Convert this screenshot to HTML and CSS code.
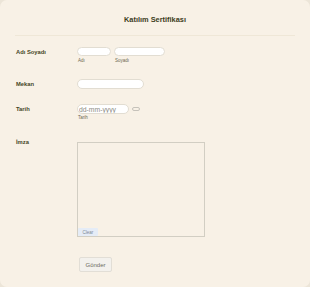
FILE: index.html
```html
<!DOCTYPE html>
<html lang="tr">
<head>
<meta charset="utf-8">
<title>Katılım Sertifikası</title>
<link rel="stylesheet" href="styles.css">
</head>
<body>
<div class="card">
  <div class="header">
    <h1 class="title">Katılım Sertifikası</h1>
  </div>
  <form class="form">
    <div class="row row-name">
      <label class="label">Adı Soyadı</label>
      <div class="field">
        <div class="split">
          <div class="sub">
            <input class="input input-first" type="text">
            <span class="sublabel">Adı</span>
          </div>
          <div class="sub">
            <input class="input input-last" type="text">
            <span class="sublabel">Soyadı</span>
          </div>
        </div>
      </div>
    </div>
    <div class="row row-place">
      <label class="label">Mekan</label>
      <div class="field">
        <input class="input input-place" type="text">
      </div>
    </div>
    <div class="row row-date">
      <label class="label">Tarih</label>
      <div class="field">
        <div class="date-line">
          <input class="input input-date" type="text" placeholder="dd-mm-yyyy">
          <svg class="cal-icon" width="8" height="4" viewBox="0 0 8 4"><rect x="0.5" y="0.5" width="7" height="3" rx="1.5" fill="none" stroke="#b9b6ae" stroke-width="0.8"/></svg>
        </div>
        <span class="sublabel">Tarih</span>
      </div>
    </div>
    <div class="row row-sign">
      <label class="label">İmza</label>
      <div class="field">
        <div class="sign-box">
          <button type="button" class="clear-btn">Clear</button>
        </div>
      </div>
    </div>
    <div class="submit-row">
      <button type="button" class="submit-btn">Gönder</button>
    </div>
  </form>
</div>
</body>
</html>
```
FILE: styles.css
```css
* { box-sizing: border-box; }
html, body { margin: 0; padding: 0; }
body {
  background: #ece5d8;
  font-family: "Liberation Sans", Arial, sans-serif;
  width: 310px;
  height: 287px;
  overflow: hidden;
}
.card {
  width: 310px;
  height: 287px;
  background: #f8f1e6;
  border-radius: 7px;
  padding: 0 15px;
}
.header {
  padding-top: 15px;
  height: 36px;
  border-bottom: 1px solid #efe7d7;
}
.title {
  margin: 0;
  text-align: center;
  font-size: 7.4px;
  line-height: 10px;
  font-weight: bold;
  color: #3d3d1c;
}
.form {
  padding-top: 11px;
}
.row {
  display: flex;
  padding-left: 1px;
}
.label {
  width: 61px;
  flex: none;
  font-size: 5.8px;
  font-weight: bold;
  color: #45451f;
  line-height: 8px;
}
.field { display: flex; flex-direction: column; }
.split { display: flex; gap: 3px; }
.sub { display: flex; flex-direction: column; }
.input {
  display: block;
  height: 9px;
  border: 1px solid #e2ddd2;
  border-radius: 6px;
  background: #fff;
  padding: 0 2px;
  font-family: "Liberation Sans", Arial, sans-serif;
  font-size: 6.8px;
  color: #555;
  outline: none;
}
.input-first { width: 34px; }
.input-last { width: 51px; }
.sublabel {
  font-size: 4.5px;
  line-height: 5px;
  color: #6b6650;
  margin-top: 2px;
  padding-left: 1px;
}
.row-name .label { padding-top: 1px; }
.row-place { margin-top: 16px; }
.input-place { width: 67px; height: 10px; }
.row-place .label { padding-top: 1px; }
.row-date { margin-top: 15px; }
.row-date .label { padding-top: 1px; }
.date-line { display: flex; align-items: center; gap: 3px; }
.input-date { width: 52px; height: 10px; padding-left: 1px; }
.input-date::placeholder { color: #8d8a84; }
.cal-icon { display: block; }
.row-date .sublabel { margin-top: 1px; }
.row-sign { margin-top: 18px; }
.row-sign .field { padding-top: 4px; }
.sign-box {
  width: 128px;
  height: 95px;
  border: 1px solid #d2cec3;
  background: #f8f1e6;
  display: flex;
  align-items: flex-end;
}
.clear-btn {
  border: none;
  background: #e5ecf6;
  color: #7f8894;
  font-family: "Liberation Sans", Arial, sans-serif;
  font-size: 4.5px;
  height: 8px;
  width: 20px;
  padding: 0;
  margin: 0;
  border-radius: 1px;
}
.submit-row {
  padding-left: 64px;
  margin-top: 20px;
}
.submit-btn {
  display: block;
  width: 33px;
  height: 15px;
  border: 1px solid #e2ded6;
  border-radius: 2px;
  background: #f3f1ed;
  color: #6e6b63;
  font-family: "Liberation Sans", Arial, sans-serif;
  font-size: 6px;
  padding: 0;
}
```
